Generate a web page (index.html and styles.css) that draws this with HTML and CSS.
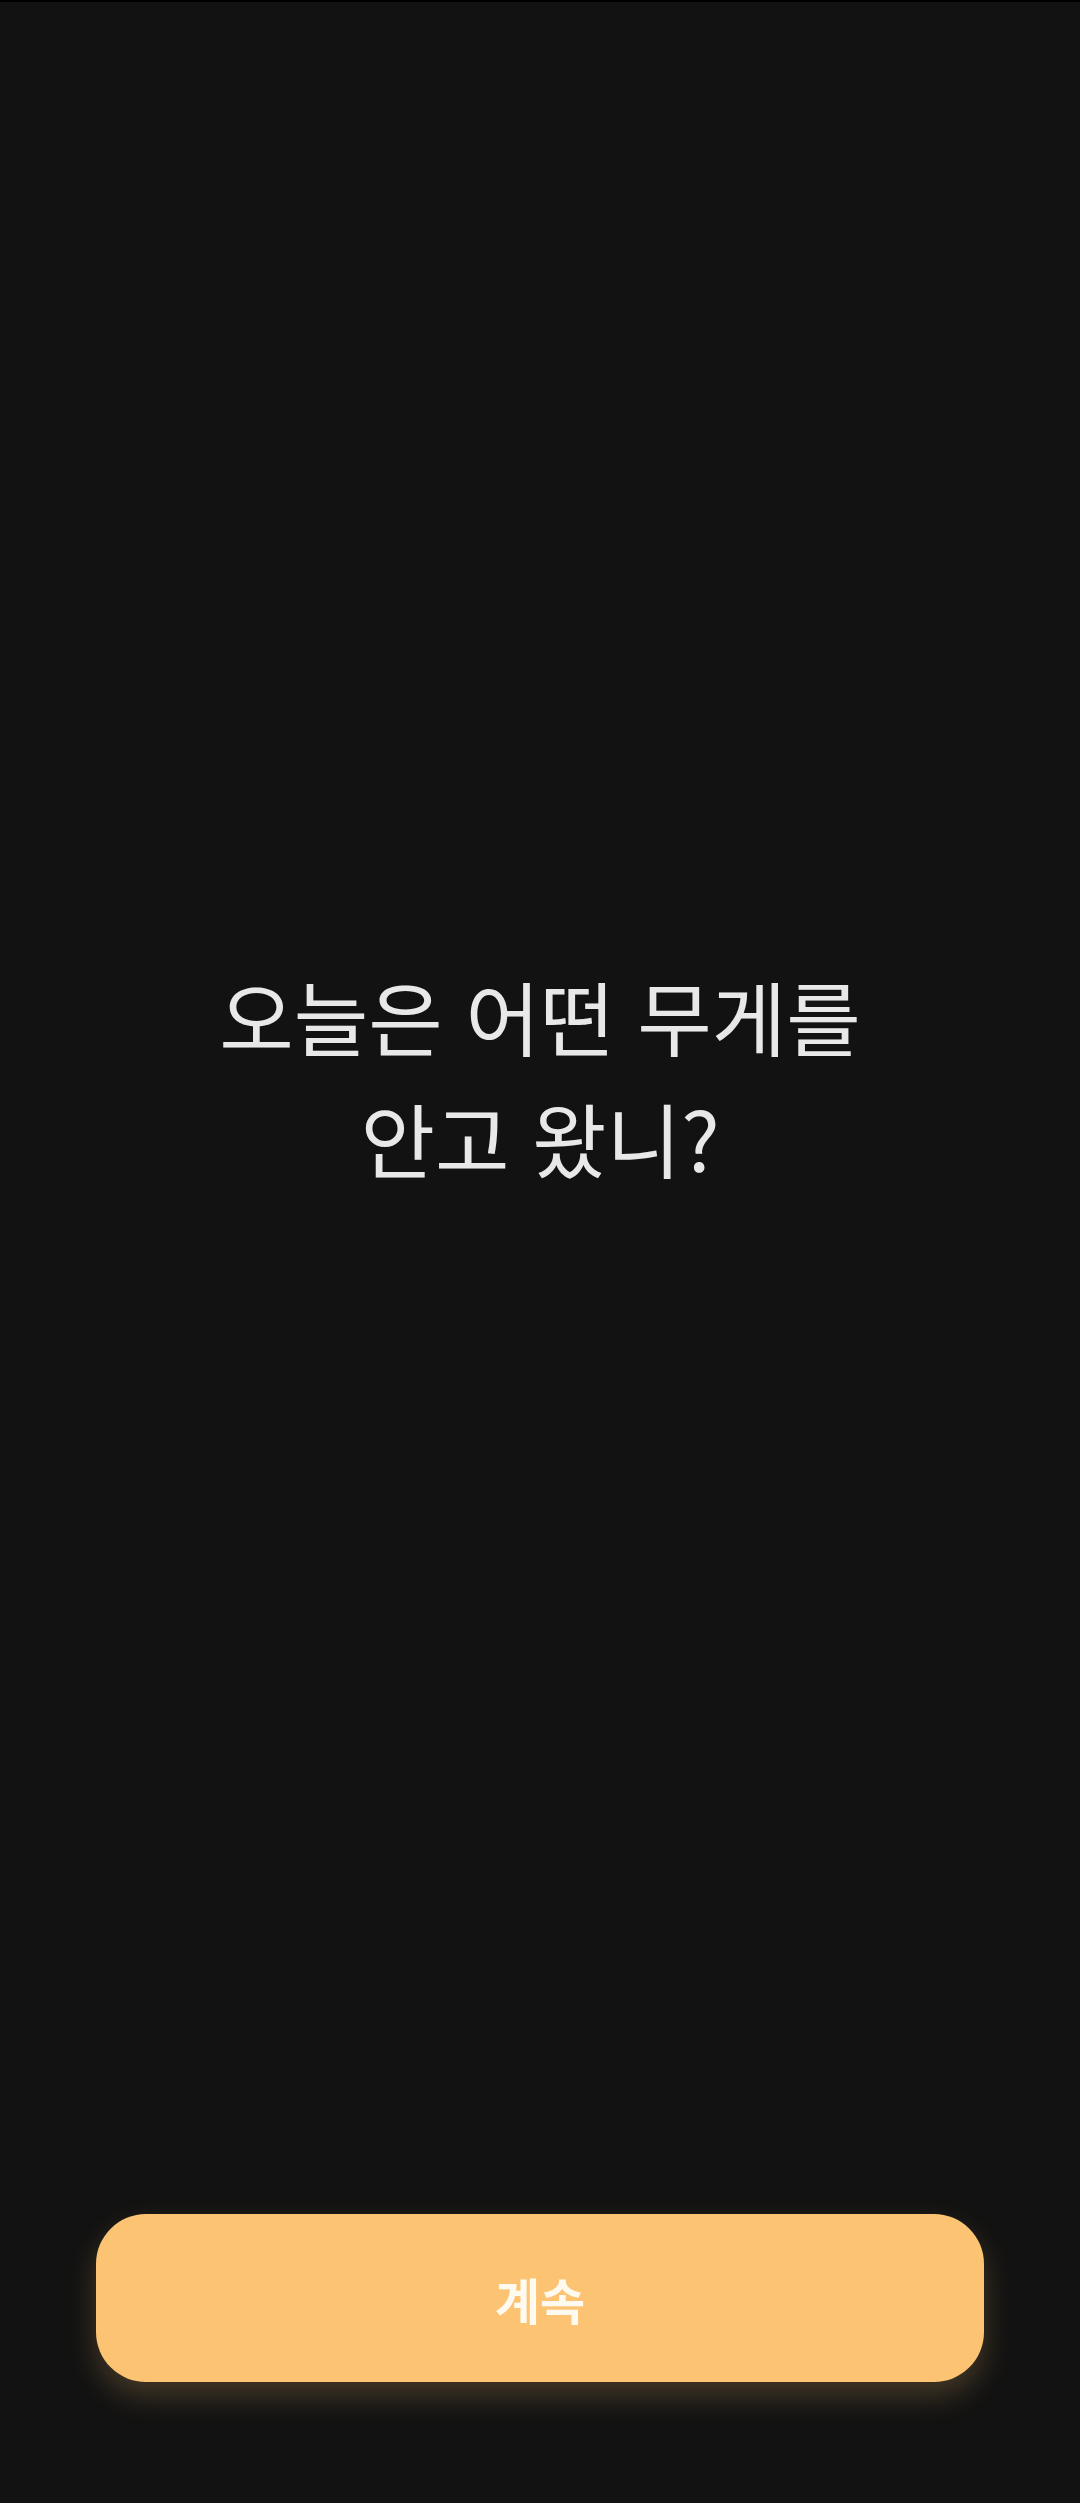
FILE: index.html
```html
<!DOCTYPE html>
<html lang="ko">
<head>
<meta charset="utf-8">
<link rel="stylesheet" href="styles.css">
</head>
<body>
<div class="screen">
  <main class="content">
    <h1 class="question">오늘은 어떤 무게를<br>안고 왔니?</h1>
  </main>
  <footer class="actions">
    <button class="continue">계속</button>
  </footer>
</div>
</body>
</html>
```

FILE: styles.css
```css
html, body {
  margin: 0;
  padding: 0;
  background: #121212;
}
.screen {
  width: 1080px;
  height: 2503px;
  box-sizing: border-box;
  border-top: 2px solid #000;
  display: flex;
  flex-direction: column;
  background: #121212;
  font-family: "Noto Sans CJK KR", "Noto Sans", sans-serif;
}
.content {
  flex: 1;
  display: flex;
  justify-content: center;
  padding-top: 952px;
}
.question {
  margin: 0;
  font-size: 81px;
  font-weight: 400;
  line-height: 122px;
  text-align: center;
  color: #e8e8e8;
}
.actions {
  padding: 0 96px 121px;
}
.continue {
  display: block;
  width: 100%;
  height: 168px;
  border: none;
  border-radius: 50px;
  background: #fbc372;
  color: #fffaf0;
  font-family: "Noto Sans CJK KR", "Noto Sans", sans-serif;
  font-size: 49px;
  font-weight: 700;
  box-shadow: 0 14px 30px rgba(251, 195, 114, 0.22);
}
```
